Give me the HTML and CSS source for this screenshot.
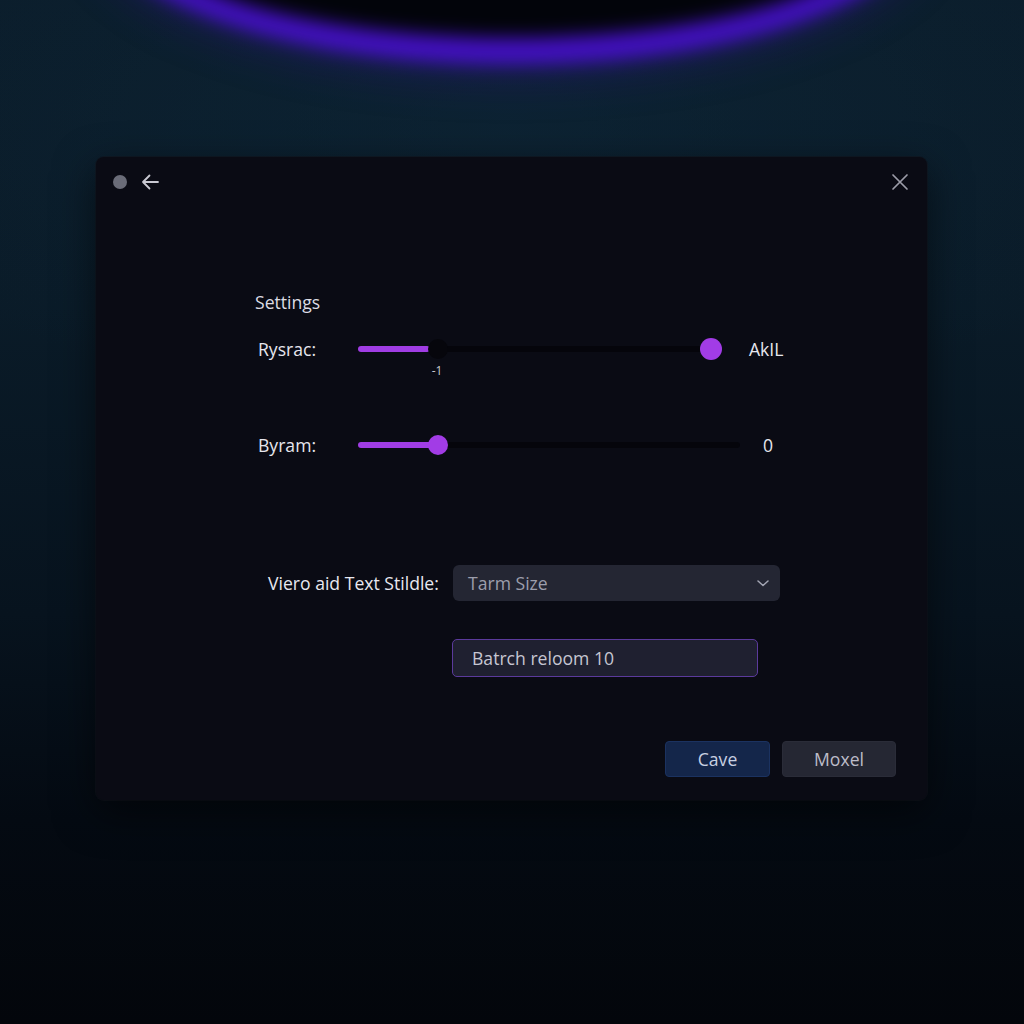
FILE: index.html
```html
<!DOCTYPE html>
<html>
<head>
<meta charset="utf-8">
<link rel="stylesheet" href="styles.css">
</head>
<body>
<div class="glow"></div>
<div class="page">
  <div class="dialog">
    <div class="header">
      <div class="header-left">
        <span class="dot"></span>
        <svg class="back" width="20" height="18" viewBox="0 0 20 18"><path d="M18 9H3M9.5 2.5L3 9l6.5 6.5" fill="none" stroke="#c9c9d2" stroke-width="1.8" stroke-linecap="round" stroke-linejoin="round"/></svg>
      </div>
      <svg class="close" width="18" height="18" viewBox="0 0 18 18"><path d="M2 2l14 14M16 2L2 16" fill="none" stroke="#9c9ca8" stroke-width="1.7" stroke-linecap="round"/></svg>
    </div>
    <div class="content">
      <div class="title">Settings</div>
      <div class="row row1">
        <span class="label">Rysrac:</span>
        <div class="slider s1">
          <div class="track"></div>
          <div class="fill" style="width:72px"></div>
          <div class="thumb dark" style="left:70px"></div>
          <div class="tick" style="left:79px">-1</div>
          <div class="thumb purple end"></div>
        </div>
        <span class="value v1">AkIL</span>
      </div>
      <div class="row row2">
        <span class="label">Byram:</span>
        <div class="slider s2">
          <div class="track"></div>
          <div class="fill" style="width:80px"></div>
          <div class="thumb purple" style="left:70px"></div>
        </div>
        <span class="value v2">0</span>
      </div>
      <div class="row row3">
        <span class="label3">Viero aid Text Stildle:</span>
        <div class="select">
          <span>Tarm Size</span>
          <svg width="14" height="10" viewBox="0 0 14 10"><path d="M2 3l5 4.5L12 3" fill="none" stroke="#a4a6b4" stroke-width="1.5" stroke-linecap="round" stroke-linejoin="round"/></svg>
        </div>
      </div>
      <div class="input-row">
        <div class="input">Batrch reloom 10</div>
      </div>
    </div>
    <div class="actions">
      <button class="btn primary">Cave</button>
      <button class="btn secondary">Moxel</button>
    </div>
  </div>
</div>
</body>
</html>
```
FILE: styles.css
```css
html, body {
  margin: 0;
  padding: 0;
}
body {
  width: 1024px;
  height: 1024px;
  overflow: hidden;
  position: relative;
  font-family: "Open Sans", "Noto Sans", sans-serif;
  background:
    radial-gradient(ellipse 700px 300px at 512px 120px, rgba(14,40,58,0.55), rgba(14,40,58,0) 100%),
    linear-gradient(180deg, #0b1d2b 0%, #0a1b28 30%, #07131e 60%, #040a12 80%, #03060b 100%);
}
.glow {
  position: absolute;
  left: 95px;
  top: -238px;
  width: 780px;
  height: 250px;
  border-radius: 50%;
  border: 26px solid #4410c4;
  background: #02040a;
  filter: blur(9px);
  box-shadow: 0 0 40px 10px rgba(55, 12, 160, 0.35);
}
.page {
  position: relative;
  padding-top: 157px;
  padding-left: 96px;
}
.dialog {
  width: 831px;
  height: 643px;
  box-sizing: border-box;
  background: #0a0b14;
  border-radius: 8px;
  box-shadow: 0 12px 40px rgba(0,0,0,0.55), 0 0 0 1px rgba(20,24,34,0.6);
  display: flex;
  flex-direction: column;
}
.header {
  height: 50px;
  display: flex;
  align-items: center;
  justify-content: space-between;
  padding: 0 18px 0 17px;
}
.header-left {
  display: flex;
  align-items: center;
  gap: 13px;
}
.dot {
  width: 14px;
  height: 14px;
  border-radius: 50%;
  background: #6a6c78;
}
.back { display: block; }
.close { display: block; }
.content {
  padding-left: 159px;
  flex: 1;
}
.title {
  margin-top: 85px;
  font-size: 17.6px;
  line-height: 20px;
  color: #dcdce4;
}
.row {
  display: flex;
  align-items: center;
  height: 30px;
}
.row1 { margin-top: 22px; padding-left: 3px; }
.row2 { margin-top: 66px; padding-left: 3px; }
.label {
  width: 100px;
  font-size: 17.6px;
  color: #e6e6ee;
}
.slider {
  position: relative;
  height: 30px;
}
.s1 { width: 364px; }
.s2 { width: 382px; }
.track {
  position: absolute;
  left: 0;
  right: 0;
  top: 12px;
  height: 6px;
  border-radius: 3px;
  background: #05050b;
}
.s1 .track { right: 20px; }
.fill {
  position: absolute;
  left: 0;
  top: 12px;
  height: 6px;
  border-radius: 3px;
  background: #a03de4;
}
.thumb {
  position: absolute;
  top: 5px;
  width: 20px;
  height: 20px;
  border-radius: 50%;
}
.thumb.dark {
  background: #06060c;
}
.thumb.purple {
  background: #a23ce6;
}
.thumb.end {
  right: 0;
  top: 4px;
  width: 22px;
  height: 22px;
}
.tick {
  position: absolute;
  top: 28px;
  font-size: 12px;
  color: #c8c8d0;
  transform: translateX(-50%);
}
.value {
  font-size: 17.6px;
  color: #e6e6ee;
}
.v1 { margin-left: 27px; }
.v2 { margin-left: 23px; }
.row3 {
  margin-top: 105px;
  height: 36px;
  padding-left: 13px;
}
.label3 {
  font-size: 17.6px;
  color: #e8e8f0;
  width: 185px;
  white-space: nowrap;
}
.select {
  width: 327px;
  height: 36px;
  box-sizing: border-box;
  background: #242633;
  border-radius: 6px;
  display: flex;
  align-items: center;
  justify-content: space-between;
  padding: 0 10px 0 15px;
  font-size: 17.6px;
  color: #9c9eac;
}
.select svg { display: block; }
.input-row {
  margin-top: 38px;
  padding-left: 197px;
}
.input {
  width: 306px;
  height: 38px;
  box-sizing: border-box;
  background: #1f2030;
  border: 1.5px solid #5b3a9c;
  border-radius: 5px;
  display: flex;
  align-items: center;
  padding-left: 19px;
  font-size: 17.6px;
  color: #c6c6d2;
}
.actions {
  display: flex;
  justify-content: flex-end;
  gap: 12px;
  padding: 0 31px 23px 0;
}
.btn {
  height: 36px;
  border-radius: 4px;
  font-family: "Open Sans", "Noto Sans", sans-serif;
  font-size: 17.6px;
  padding: 0;
  cursor: pointer;
}
.primary {
  width: 105px;
  background: #14264a;
  border: 1px solid #1b3260;
  color: #c8d0e2;
}
.secondary {
  width: 114px;
  background: #252733;
  border: 1px solid #2a2c38;
  color: #bcbcc8;
}
```
